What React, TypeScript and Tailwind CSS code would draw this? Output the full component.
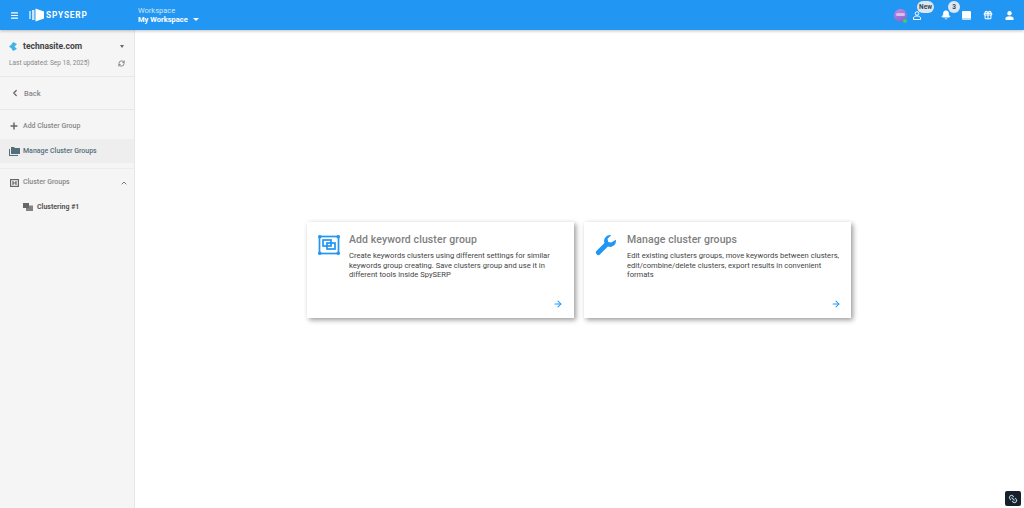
import React from "react";
import { Menu, Bell, Gift, ChevronLeft, Plus, ChevronUp, ArrowRight, RefreshCw, Link2 } from "lucide-react";

const Card = ({ icon, title, lines, iconClass, arrowClass }: { icon: React.ReactNode; title: string; lines: string[]; iconClass: string; arrowClass: string }) => (
  <div className="w-[267px] h-[96px] bg-white shadow-[2px_2px_5px_rgba(0,0,0,0.4)] relative flex">
    <div className={iconClass}>{icon}</div>
    <div className="pt-[10px]">
      <div className="text-[10.5px] leading-[15px] text-[#808080] font-medium tracking-[0.1px]">{title}</div>
      <div className="mt-[4px] text-[7.6px] leading-[9.7px] text-[#444]">
        {lines.map((l) => (
          <div key={l} className="whitespace-nowrap">{l}</div>
        ))}
      </div>
    </div>
    <ArrowRight className={arrowClass} size={10} strokeWidth={2.5} />
  </div>
);

export default function App() {
  return (
    <div className="w-[1024px] h-[508px] overflow-hidden relative bg-white flex flex-col font-['Roboto',sans-serif]">
      <header className="h-[30px] bg-[#2196f3] shrink-0 flex items-center shadow-[0_1px_3px_rgba(0,0,0,0.25)] relative z-10 text-white">
        <Menu className="ml-[10px]" size={9} strokeWidth={3} />
        <svg className="ml-[10px]" width="16" height="16" viewBox="0 0 16 16" fill="white">
          <rect x="0" y="4" width="2" height="8" opacity="0.6" />
          <rect x="3" y="3" width="2.500" height="10" opacity="0.75" />
          <path d="M6.500 1.500 L15 4.500 V11.500 L6.500 14.500 Z" />
        </svg>
        <span className="ml-[1px] w-[44px] text-[8.3px] font-bold tracking-[0.8px] leading-none">SPYSERP</span>
        <div className="ml-[48px] leading-[9px]">
          <div className="text-[7.5px] text-[#cfe6fb]">Workspace</div>
          <div className="text-[7.5px] font-bold flex items-center">
            My Workspace
            <span className="ml-[5px] border-x-[3px] border-x-transparent border-t-[3px] border-t-white" />
          </div>
        </div>
        <div className="ml-auto flex items-center relative h-full">
          <span className="w-[13px] h-[13px] rounded-full bg-[linear-gradient(160deg,#c58ae0,#7d63d0)] relative mr-[4px]">
            <span className="absolute left-[2px] top-[4px] w-[9px] h-[3px] rounded-full bg-[#d9bdea]" />
            <span className="absolute right-0 bottom-[-1px] w-[4px] h-[4px] rounded-full bg-[#35d46a]" />
          </span>
          <span className="w-[14px] flex justify-center mr-[15px]">
            <svg width="10" height="9" viewBox="0 0 10 9" fill="none" stroke="white" strokeWidth="1">
              <circle cx="4" cy="2.500" r="1.800" />
              <path d="M0.500 8.500V7c0-1.200 1.500-2 3.500-2s3.500.8 3.500 2v1.500z" />
            </svg>
          </span>
          <span className="w-[12px] flex justify-center mr-[10px]"><Bell size={10} fill="white" /></span>
          <span className="w-[9px] h-[9px] bg-white rounded-[1px] mr-[11px] border-b-[2px] border-b-[#bcdcf8]" />
          <span className="w-[12px] flex justify-center mr-[10px]"><Gift size={10} strokeWidth={2.5} /></span>
          <span className="w-[10px] flex justify-center mr-[10px]">
            <svg width="9" height="9" viewBox="0 0 9 9" fill="white">
              <circle cx="4.500" cy="2.300" r="2.200" />
              <path d="M0.500 9V7.300C0.500 6 2.300 5.200 4.500 5.200S8.500 6 8.500 7.300V9z" />
            </svg>
          </span>
          <span className="absolute left-[23px] top-[1px] w-[17px] text-center h-[12px] rounded-full bg-[#dbe7f1] text-[#37474f] text-[6.5px] font-bold leading-[12px]">New</span>
          <span className="absolute left-[54px] top-[1px] w-[12px] h-[12px] rounded-full bg-[#dbe7f1] text-[#37474f] text-[6.5px] font-bold leading-[12px] text-center">3</span>
        </div>
      </header>
      <div className="flex flex-1 min-h-0">
        <aside className="w-[135px] shrink-0 bg-[#f5f5f5] border-r border-[#e6e6e6] flex flex-col">
          <div className="h-[47px] border-b border-[#e8e8e8] px-[9px] pt-[10px]">
            <div className="flex items-center h-[12px]">
              <svg width="8" height="9" viewBox="0 0 8 9" fill="#40b4e5"><path d="M4 0 8 2 5.500 4.500 8 7 4 9 2.500 6.500 0 4.500 2.500 2.500z" /></svg>
              <span className="ml-[6px] text-[8.5px] font-bold text-[#444]">technasite.com</span>
              <span className="ml-auto mr-[1px] border-x-[2.5px] border-x-transparent border-t-[3px] border-t-[#666]" />
            </div>
            <div className="flex items-center mt-[7px]">
              <span className="text-[6.5px] text-[#888] whitespace-nowrap">Last updated: Sep 18, 2025)</span>
              <RefreshCw className="ml-auto text-[#666]" size={7} strokeWidth={2.5} />
            </div>
          </div>
          <div className="h-[33px] border-b border-[#e8e8e8] flex items-center pl-[10px] text-[#888]">
            <ChevronLeft className="text-[#666]" size={10} strokeWidth={3} />
            <span className="ml-[4px] text-[7.5px] font-medium relative top-[1px]">Back</span>
          </div>
          <div className="h-[26px] mt-[3px] flex items-center pl-[9px] text-[#888]">
            <Plus className="text-[#666]" size={10} strokeWidth={3.5} />
            <span className="ml-[4px] text-[7px] font-medium">Add Cluster Group</span>
          </div>
          <div className="h-[24px] bg-[#eeeeee] flex items-center pl-[9px]">
            <svg width="11" height="9" viewBox="0 0 11 9" fill="#546e7a"><path d="M2 0h3l1 1h5v6H2z" /><path d="M0 2h1v6h8v1H0z" /></svg>
            <span className="ml-[3px] text-[7px] font-medium text-[#546e7a]">Manage Cluster Groups</span>
          </div>
          <div className="mt-[5px] border-t border-[#ececec] h-[28px] flex items-center pl-[10px] pr-[6px] text-[#888]">
            <svg width="9" height="8" viewBox="0 0 9 8" fill="none" stroke="#666" strokeWidth="1.200"><rect x="0.600" y="0.600" width="7.800" height="6.800" /><path d="M3 2v4M3 4h3M6 2v4" /></svg>
            <span className="ml-[4px] text-[7px] font-medium">Cluster Groups</span>
            <ChevronUp className="ml-auto text-[#777]" size={8} strokeWidth={3} />
          </div>
          <div className="h-[22px] flex items-center pl-[23px]">
            <svg width="10" height="8" viewBox="0 0 10 8" fill="#666"><rect width="6" height="5" /><rect x="3" y="2.500" width="7" height="5.500" opacity="0.8" /></svg>
            <span className="ml-[4px] text-[7px] font-bold text-[#555]">Clustering #1</span>
          </div>
        </aside>
        <main className="flex-1 flex justify-center gap-[10px] pt-[192px] pr-[1px]">
          <Card
            iconClass="w-[42px] shrink-0 pt-[13px] pl-[11px]"
            arrowClass="absolute right-[11px] bottom-[9px] text-[#2196f3]"
            title="Add keyword cluster group"
            lines={["Create keywords clusters using different settings for similar", "keywords group creating. Save clusters group and use it in", "different tools inside SpySERP"]}
            icon={
              <svg width="22" height="20" viewBox="0 0 22 20" fill="none" stroke="#2196f3" strokeWidth="1.700">
                <rect x="1.500" y="1.500" width="19" height="17" />
                <rect x="5" y="5" width="8" height="6" />
                <rect x="9" y="8" width="8" height="6" />
                <g fill="#2196f3" stroke="none">
                  <circle cx="1.800" cy="1.800" r="1.800" /><circle cx="20.200" cy="1.800" r="1.800" /><circle cx="1.800" cy="18.200" r="1.800" /><circle cx="20.200" cy="18.200" r="1.800" />
                </g>
              </svg>
            }
          />
          <Card
            iconClass="w-[43px] shrink-0 pt-[12px] pl-[11px]"
            arrowClass="absolute right-[10px] bottom-[9px] text-[#2196f3]"
            title="Manage cluster groups"
            lines={["Edit existing clusters groups, move keywords between clusters,", "edit/combine/delete clusters, export results in convenient", "formats"]}
            icon={
              <svg width="22" height="22" viewBox="0 0 24 24" fill="#2196f3"><path d="M22.700 6.300a6.500 6.500 0 0 1-8.600 7.400L5.600 22.200a2.600 2.600 0 0 1-3.800-3.800l8.500-8.500A6.500 6.500 0 0 1 17.700 1.300l-4 4 .7 3.300 3.300.7z" /></svg>
            }
          />
        </main>
      </div>
      <div className="absolute right-[3px] bottom-[2px] w-[16px] h-[15px] rounded-[2px] bg-[#17202a] flex items-center justify-center">
        <Link2 className="text-[#b5cfe0] rotate-45" size={10} strokeWidth={2.5} />
      </div>
    </div>
  );
}
